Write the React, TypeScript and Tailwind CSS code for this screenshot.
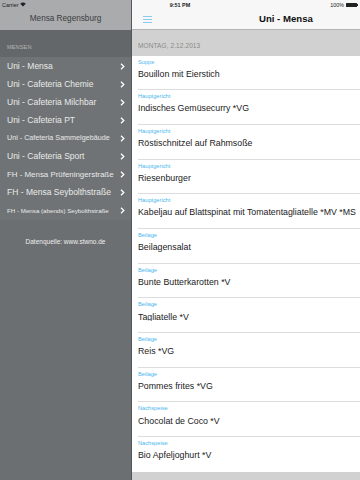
import React from "react";

const mensen = [
  { name: "Uni - Mensa", size: "text-[8.5px]" },
  { name: "Uni - Cafeteria Chemie", size: "text-[8.5px]" },
  { name: "Uni - Cafeteria Milchbar", size: "text-[8.5px]" },
  { name: "Uni - Cafeteria PT", size: "text-[8.5px]" },
  { name: "Uni - Cafeteria Sammelgebäude", size: "text-[7.2px]" },
  { name: "Uni - Cafeteria Sport", size: "text-[8.5px]" },
  { name: "FH - Mensa Prüfeningerstraße", size: "text-[7.9px]" },
  { name: "FH - Mensa Seybolthstraße", size: "text-[8.5px]" },
  { name: "FH - Mensa (abends) Seybolthstraße", size: "text-[6.2px]" },
];

const dishes = [
  { cat: "Suppe", name: "Bouillon mit Eierstich" },
  { cat: "Hauptgericht", name: "Indisches Gemüsecurry *VG" },
  { cat: "Hauptgericht", name: "Röstischnitzel auf Rahmsoße" },
  { cat: "Hauptgericht", name: "Riesenburger" },
  { cat: "Hauptgericht", name: "Kabeljau auf Blattspinat mit Tomatentagliatelle  *MV *MS" },
  { cat: "Beilage", name: "Beilagensalat" },
  { cat: "Beilage", name: "Bunte Butterkarotten *V" },
  { cat: "Beilage", name: "Tagliatelle *V" },
  { cat: "Beilage", name: "Reis *VG" },
  { cat: "Beilage", name: "Pommes frites *VG" },
  { cat: "Nachspeise", name: "Chocolat de Coco *V" },
  { cat: "Nachspeise", name: "Bio Apfeljoghurt  *V" },
];

function Chevron() {
  return (
    <svg width="5" height="7" viewBox="0 0 5 7" className="shrink-0">
      <path d="M1 0.8 L3.8 3.5 L1 6.2" fill="none" stroke="#ffffff" strokeWidth="1.3" />
    </svg>
  );
}

export default function App() {
  return (
    <div
      className="relative w-[360px] h-[480px] overflow-hidden flex bg-[#686c6e]"
      style={{ fontFamily: '"Liberation Sans", Arial, sans-serif' }}
    >
      {/* status bar overlay */}
      <div className="absolute top-0 left-0 right-0 h-[10px] flex items-center justify-between px-[2px] text-[5.4px] text-[#222] z-10">
        <div className="flex items-center gap-[2px]">
          <span>Carrier</span>
          <svg width="6" height="5" viewBox="0 0 12 9">
            <path d="M6 8.5 L0.5 3 A8 8 0 0 1 11.5 3 Z" fill="#222" />
          </svg>
        </div>
        <div className="absolute left-0 right-0 text-center font-bold pointer-events-none">9:51 PM</div>
        <div className="flex items-center gap-[2px]">
          <span>100%</span>
          <div className="flex items-center">
            <div className="w-[11px] h-[4px] bg-[#222] rounded-[0.5px]" />
            <div className="w-[1px] h-[2px] bg-[#222]" />
          </div>
        </div>
      </div>

      {/* sidebar */}
      <div className="w-[131px] shrink-0 flex flex-col">
        <div className="h-[30px] bg-[#a9abad] flex flex-col">
          <div className="h-[9px]" />
          <div className="flex-1 flex items-center justify-center text-[8.2px] text-[#3a3d3f]">
            Mensa Regensburg
          </div>
        </div>
        <div className="h-[27px] bg-[#646769] flex items-end px-[7px] pb-[6px]">
          <span className="text-[5.6px] text-[#b3b6b8] tracking-[0.1px]">MENSEN</span>
        </div>
        <div className="bg-[#6f7375]">
          {mensen.map((m) => (
            <div key={m.name} className="h-[18.1px] flex items-center pl-[7px] pr-[6px]">
              <span className={`flex-1 whitespace-nowrap text-[#e9eaea] ${m.size}`}>{m.name}</span>
              <Chevron />
            </div>
          ))}
        </div>
        <div className="flex-1 bg-[#6b6f71] flex justify-center pt-[17px]">
          <span className="text-[6.5px] text-[#eeeeee]">Datenquelle: www.stwno.de</span>
        </div>
      </div>

      {/* main */}
      <div className="flex-1 min-w-0 flex flex-col border-l border-[#54585a] bg-[#d1d1d1]">
        <div className="h-[30px] bg-[#f7f7f7] border-b border-[#b4b4b4] flex flex-col">
          <div className="h-[9px]" />
          <div className="flex-1 flex items-center pl-[11px]">
            <svg width="9" height="7" viewBox="0 0 9 7">
              <rect x="0" y="0" width="9" height="0.8" fill="#6cc2ee" />
              <rect x="0" y="3" width="9" height="0.8" fill="#6cc2ee" />
              <rect x="0" y="6" width="9" height="0.8" fill="#6cc2ee" />
            </svg>
            <span className="ml-[107px] text-[9.6px] font-bold text-[#111]">Uni - Mensa</span>
          </div>
        </div>
        <div className="h-[25.5px] flex items-end px-[6px] pb-[5px]">
          <span className="text-[6.5px] text-[#8a8a8a] tracking-[0.1px]">MONTAG, 2.12.2013</span>
        </div>
        <div className="bg-white">
          {dishes.map((d, i) => (
            <div key={i} className="h-[34.7px] pl-[6px] flex">
              <div className={`flex-1 min-w-0 flex flex-col ${i < dishes.length - 1 ? "border-b border-[#dcdcdc]" : ""}`}>
                <span className="text-[5.7px] text-[#4ab6ee] leading-none mt-[4px]">{d.cat}</span>
                <span className="text-[8.8px] text-[#1a1a1a] whitespace-nowrap overflow-hidden leading-none mt-[4.5px]">
                  {d.name}
                </span>
              </div>
            </div>
          ))}
        </div>
      </div>
    </div>
  );
}
